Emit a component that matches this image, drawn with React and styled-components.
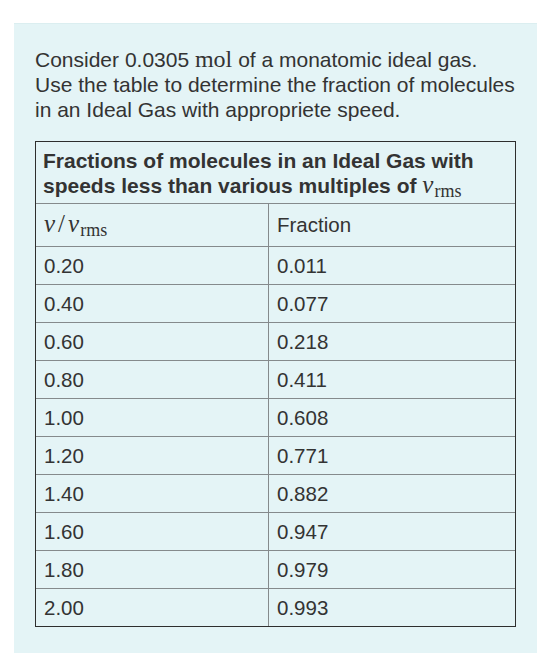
import React from "react";
import styled, { createGlobalStyle } from "styled-components";

const Global = createGlobalStyle`
  html, body { margin: 0; padding: 0; background: #ffffff; }
  body { font-family: Arial, "Liberation Sans", Helvetica, sans-serif; color: #333333; }
`;

const Panel = styled.div`
  box-sizing: border-box;
  margin: 23px 0 0 14px;
  width: 523px;
  height: 630px;
  background: #e4f4f6;
  border-top: 1px solid #dbeef0;
  padding: 23px 21px 0 21px;
`;

const Intro = styled.p`
  margin: 0 0 19px 0;
  font-size: 21px;
  line-height: 25px;
  color: #333333;
`;

const Math = styled.span`
  font-family: "Liberation Serif", "Times New Roman", serif;
  font-size: ${(p) => p.$size || 24}px;
  font-style: ${(p) => (p.$italic ? "italic" : "normal")};
  font-weight: normal;
  line-height: 0;
  padding: ${(p) => (p.$pad ? `0 ${p.$pad}px` : "0")};
`;

const Sub = styled.sub`
  font-family: "Liberation Serif", "Times New Roman", serif;
  font-style: normal;
  font-weight: normal;
  font-size: 18px;
  vertical-align: -4px;
  line-height: 0;
  margin-left: 1px;
`;

const Table = styled.table`
  width: 481px;
  border-collapse: separate;
  border-spacing: 0;
  border: 1px solid #2e2e2e;
  font-size: 20.5px;
  color: #333333;
`;

const CaptionCell = styled.th`
  text-align: left;
  font-weight: bold;
  font-size: 21px;
  line-height: 25px;
  padding: 6px 6px 5px 7px;
  color: #333333;
  white-space: nowrap;
`;

const Cell = styled.td`
  padding: ${(p) => (p.$head ? "10px 7px 11px 8px" : "8px 7px 8px 8px")};
  line-height: 21px;
  border-top: 1px solid #858a8c;
  border-left: ${(p) => (p.$second ? "1px solid #858a8c" : "none")};
  text-align: left;
  vertical-align: middle;
  white-space: nowrap;
`;

const rows = [
  ["0.20", "0.011"],
  ["0.40", "0.077"],
  ["0.60", "0.218"],
  ["0.80", "0.411"],
  ["1.00", "0.608"],
  ["1.20", "0.771"],
  ["1.40", "0.882"],
  ["1.60", "0.947"],
  ["1.80", "0.979"],
  ["2.00", "0.993"],
];

const Vrms = () => (
  <>
    <Math $italic $size={25}>v</Math>
    <Sub>rms</Sub>
  </>
);

export default function App() {
  return (
    <>
      <Global />
      <Panel>
        <Intro>
          Consider 0.0305 <Math $size={24}>mol</Math> of a monatomic ideal gas.
          <br />
          Use the table to determine the fraction of molecules
          <br />
          in an Ideal Gas with appropriete speed.
        </Intro>
        <Table>
          <colgroup>
            <col style={{ width: "232px" }} />
            <col />
          </colgroup>
          <thead>
            <tr>
              <CaptionCell colSpan={2}>
                Fractions of molecules in an Ideal Gas with
                <br />
                speeds less than various multiples of <Vrms />
              </CaptionCell>
            </tr>
          </thead>
          <tbody>
            <tr>
              <Cell $head>
                <Math $italic $size={25}>v</Math>
                <Math $size={25} $pad={3}>/</Math>
                <Vrms />
              </Cell>
              <Cell $head $second>
                Fraction
              </Cell>
            </tr>
            {rows.map(([a, b]) => (
              <tr key={a}>
                <Cell>{a}</Cell>
                <Cell $second>{b}</Cell>
              </tr>
            ))}
          </tbody>
        </Table>
      </Panel>
    </>
  );
}
